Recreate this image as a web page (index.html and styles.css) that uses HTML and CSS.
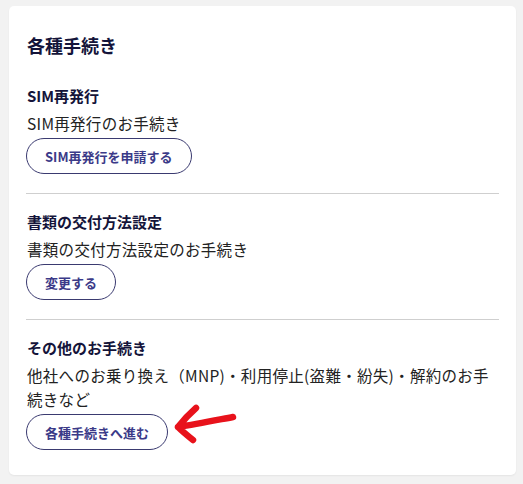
FILE: index.html
```html
<!DOCTYPE html>
<html lang="ja">
<head>
<meta charset="utf-8">
<link rel="stylesheet" href="styles.css">
</head>
<body>
<div class="card">
  <h2 class="title">各種手続き</h2>
  <section class="item first">
    <h3 class="item-head">SIM再発行</h3>
    <p class="item-text">SIM再発行のお手続き</p>
    <div class="btn-row"><a class="btn">SIM再発行を申請する</a></div>
  </section>
  <section class="item">
    <h3 class="item-head">書類の交付方法設定</h3>
    <p class="item-text">書類の交付方法設定のお手続き</p>
    <div class="btn-row"><a class="btn">変更する</a></div>
  </section>
  <section class="item last">
    <h3 class="item-head">その他のお手続き</h3>
    <p class="item-text">他社へのお乗り換え（MNP)・利用停止(盗難・紛失)・解約のお手続きなど</p>
    <div class="btn-row">
      <a class="btn">各種手続きへ進む</a>
      <svg class="arrow" width="70" height="45" viewBox="0 0 70 45">
        <path d="M62 15 C 46 18, 26 22, 7 25 M25 6 C 17 13, 11 20, 7 25 C 12 30, 17 34, 22 38" fill="none" stroke="#e8121b" stroke-width="6.5" stroke-linecap="round" stroke-linejoin="round"/>
      </svg>
    </div>
  </section>
</div>
</body>
</html>
```
FILE: styles.css
```css
html, body {
  margin: 0;
  padding: 0;
}
body {
  background: #f2f2f2;
  padding: 6px 7px 9px 9px;
  font-family: "Noto Sans CJK JP", "Noto Sans", sans-serif;
  color: #222;
}
.card {
  width: 473px;
  background: #fff;
  border-radius: 5px;
  box-shadow: 0 1px 2px rgba(0,0,0,0.06);
  padding: 26px 17px 25px 17px;
}
.title {
  margin: 0 0 26px 1px;
  font-size: 18px;
  line-height: 26px;
  font-weight: 700;
  color: #14143a;
}
.item {
  padding: 16px 0 19px 0;
  border-bottom: 1px solid #cfcfcf;
}
.item.first {
  padding-top: 0;
}
.item.last {
  border-bottom: none;
  padding-bottom: 0;
}
.item-head {
  margin: 0 0 3px 1px;
  font-size: 15px;
  line-height: 24px;
  font-weight: 700;
  color: #14143a;
}
.item-text {
  margin: 0 0 3px 1px;
  font-size: 15.5px;
  letter-spacing: 0.3px;
  line-height: 24px;
  color: #222;
}
.btn-row {
  position: relative;
  display: flex;
}
.btn {
  display: inline-flex;
  align-items: center;
  justify-content: center;
  height: 34px;
  padding: 0 18px;
  border: 1px solid #3a3a70;
  border-radius: 18px;
  font-size: 13px;
  font-weight: 700;
  color: #3b3a88;
  text-decoration: none;
}
.arrow {
  position: absolute;
  left: 145px;
  top: -12px;
}
```
